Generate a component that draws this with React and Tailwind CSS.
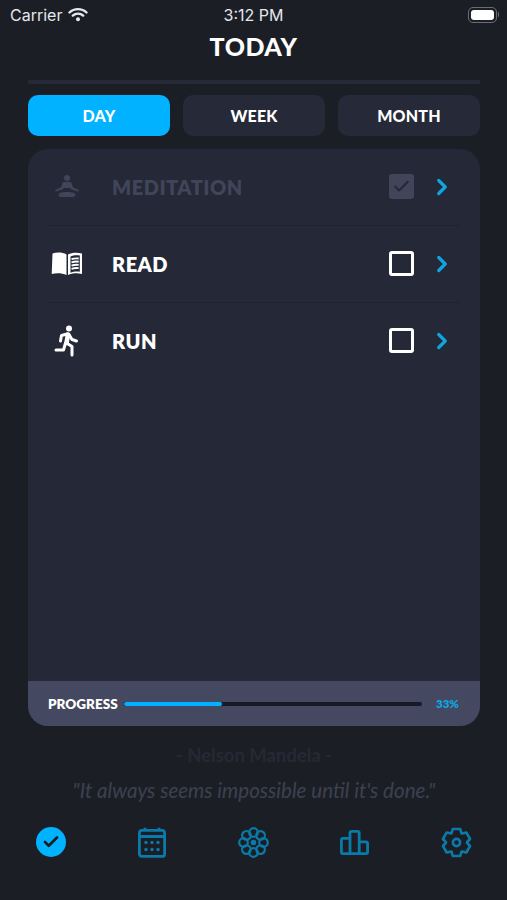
import { ChevronRight, Check } from 'lucide-react';

const heading = "font-['Lato',sans-serif]";

function WifiIcon() {
  return (
    <svg width="20" height="15" viewBox="0 0 20 15" fill="none" stroke="#e5e7eb" strokeLinecap="round">
      <path d="M1.500 5.500C6 1 14 1 18.500 5.500" strokeWidth="2.400" />
      <path d="M4.800 8.600C7.600 6 12.400 6 15.200 8.600" strokeWidth="2.400" />
      <circle cx="10" cy="12.300" r="2" fill="#e5e7eb" stroke="none" />
    </svg>
  );
}

function BatteryIcon() {
  return (
    <div className="flex items-center gap-px">
      <div className="w-[29px] h-[16px] rounded-[5px] border border-[#6b6e75] p-[2px]">
        <div className="w-full h-full rounded-[3px] bg-white" />
      </div>
      <div className="w-[1.5px] h-[5px] rounded-r bg-[#6b6e75]" />
    </div>
  );
}

function MeditationIcon({ color }) {
  return (
    <svg width="26" height="23" viewBox="0 0 26 23" fill={color}>
      <circle cx="13" cy="3" r="3" />
      <path d="M10.200 7h5.600c1 0 1.600.6 1.900 1.400l1.300 3.800 5.300 2.600c1 .5.5 1.900-.6 1.600l-6.700-2.100-.8-1.300H9.800l-.8 1.300-6.700 2.100c-1.100.3-1.600-1.100-.6-1.600l5.300-2.600 1.300-3.800C8.600 7.600 9.200 7 10.200 7z" />
      <path d="M6 18c4-1.400 10-1.400 14 0 2 .8 1.600 4-.8 4H6.800C4.400 22 4 18.800 6 18z" />
    </svg>
  );
}

function BookIcon() {
  return (
    <svg width="32" height="25" viewBox="0 0 32 25">
      <path d="M1.500 2.500C6 1 11.500 1.200 15.500 3.500V24C11.500 22.200 5.500 21.800 .7 23z" fill="#fff" />
      <path d="M17 3.500C20.500 1.500 26 1 31 2.500V23c-4.500-1.200-10.500-.8-14 1z" fill="#fff" />
      <path d="M19.500 5.500c2.800-1.300 6.500-1.500 9.300-.9v16.200c-2.800-.6-6.500-.4-9.300.9z" fill="#242837" />
      <path d="M20.500 8.200c2.400-.8 4.900-1 7.200-.7M20.500 11.400c2.400-.8 4.900-1 7.200-.7M20.500 14.600c2.400-.8 4.900-1 7.200-.7M20.500 17.800c2.400-.8 4.900-1 7.200-.7" stroke="#fff" strokeWidth="1.900" fill="none" />
    </svg>
  );
}

function RunIcon() {
  return (
    <svg width="26" height="32" viewBox="0 0 26 32" fill="none" stroke="#fff" strokeWidth="3" strokeLinecap="round" strokeLinejoin="round">
      <circle cx="15" cy="3.400" r="3" fill="#fff" stroke="none" />
      <path d="M14 9.500l-1.500 8.500" strokeWidth="4.600" />
      <path d="M13 9l-5.500 1.500-1 5.500" />
      <path d="M15 9.500l3 5 4.500 1.500" />
      <path d="M12.500 18l5.500 3.500V30" />
      <path d="M11.500 18L9.500 25H2" />
    </svg>
  );
}

function CalendarIcon() {
  return (
    <svg width="28" height="31" viewBox="0 0 28 31" fill="none" stroke="#0a7aa8" strokeWidth="2.800">
      <rect x="1.400" y="3.400" width="25.200" height="26" rx="2.500" />
      <path d="M1.400 9.500h25.200M7 .8v3M21 .8v3" />
      <g fill="#0a7aa8" stroke="none">
        <circle cx="8" cy="15.500" r="1.700" /><circle cx="14" cy="15.500" r="1.700" /><circle cx="20" cy="15.500" r="1.700" />
        <circle cx="8" cy="22.500" r="1.700" /><circle cx="14" cy="22.500" r="1.700" /><circle cx="20" cy="22.500" r="1.700" />
      </g>
    </svg>
  );
}

function AtomIcon() {
  const angles = [0, 45, 90, 135, 180, 225, 270, 315];
  return (
    <svg width="31" height="31" viewBox="0 0 31 31" fill="none" stroke="#0a7aa8" strokeWidth="2.200">
      <circle cx="15.500" cy="15.500" r="2.800" fill="#0a7aa8" stroke="none" />
      {angles.map(a => (
        <circle key={a} cx="15.500" cy="5.500" r="4.300" transform={`rotate(${a} 15.500 15.500)`} />
      ))}
    </svg>
  );
}

function BarsIcon() {
  return (
    <svg width="29" height="25" viewBox="0 0 29 25" fill="none" stroke="#0a7aa8" strokeWidth="2.800" strokeLinejoin="round">
      <path d="M10 23.600V3a1.600 1.600 0 0 1 1.600-1.600h6A1.600 1.600 0 0 1 19.200 3v20.600z" />
      <path d="M10 23.600H3a1.600 1.600 0 0 1-1.600-1.600V10a1.600 1.600 0 0 1 1.600-1.600h7" />
      <path d="M19.200 23.600H26a1.600 1.600 0 0 0 1.600-1.600V13.500a1.600 1.600 0 0 0-1.600-1.600h-6.800" />
    </svg>
  );
}

// six flat teeth, computed so they stay evenly spaced
function gearPath(cx, cy, inner, outer) {
  const pts = [];
  for (let i = 0; i < 6; i++) {
    const a = (i * Math.PI) / 3 - Math.PI / 2;
    [[-0.5, inner], [-0.27, outer], [0.27, outer], [0.5, inner]].forEach(([d, r]) => {
      pts.push(`${(cx + r * Math.cos(a + d)).toFixed(2)} ${(cy + r * Math.sin(a + d)).toFixed(2)}`);
    });
  }
  return `M${pts.join('L')}Z`;
}

function GearIcon() {
  return (
    <svg width="31" height="31" viewBox="0 0 31 31" fill="none" stroke="#0a7aa8" strokeWidth="2.600" strokeLinejoin="round">
      <path d={gearPath(15.5, 15.5, 10.5, 14)} />
      <circle cx="15.500" cy="15.500" r="3.600" />
    </svg>
  );
}

function TaskRow({ icon, label, done, last }) {
  return (
    <div className={`h-[77px] pb-[2px] flex items-center pl-[22px] pr-[28px] relative ${last ? '' : "after:content-[''] after:absolute after:left-[20px] after:right-[20px] after:bottom-0 after:h-px after:bg-[#20232f]"}`}>
      <div className="w-[34px] flex justify-center shrink-0">{icon}</div>
      <span className={`${heading} ml-[28px] flex-1 text-[20px] font-extrabold tracking-[0.5px] leading-none ${done ? 'text-[#404559]' : 'text-white'}`}>
        {label}
      </span>
      {done ? (
        <div className="w-[25px] h-[25px] rounded-[3px] bg-[#404559] flex items-center justify-center">
          <Check size={19} strokeWidth={2.6} color="#242837" />
        </div>
      ) : (
        <div className="w-[25px] h-[25px] rounded-[3px] border-[3px] border-white" />
      )}
      <ChevronRight size={26} strokeWidth={3} color="#0ea5e0" className="ml-[15px] mr-[-3px]" />
    </div>
  );
}

export default function App() {
  return (
    <div className="w-[507px] h-[900px] bg-[#1c1e26] flex flex-col overflow-hidden">
      {/* status bar */}
      <div className="h-[29px] pl-[10px] pr-[8px] flex items-center justify-between relative font-['Inter',sans-serif] text-[16px] text-[#e5e7eb]">
        <div className="flex items-center gap-[6px] z-10">
          <span>Carrier</span>
          <WifiIcon />
        </div>
        <span className="absolute left-0 right-0 text-center">3:12 PM</span>
        <BatteryIcon />
      </div>

      <div className={`${heading} h-[36px] flex items-center justify-center text-[25px] font-black tracking-[0.5px] text-white`}>TODAY</div>

      <div className="pl-[28px] pr-[27px] flex flex-col flex-1">
        <div className="mt-[15px] h-[4px] bg-[#252938]" />

        <div className={`${heading} mt-[11px] flex gap-[13px] text-[16px] font-black tracking-[0.2px] text-white`}>
          <div className="flex-1 h-[41px] rounded-[10px] bg-[#00b2ff] flex items-center justify-center">DAY</div>
          <div className="flex-1 h-[41px] rounded-[10px] bg-[#252938] flex items-center justify-center">WEEK</div>
          <div className="flex-1 h-[41px] rounded-[10px] bg-[#252938] flex items-center justify-center">MONTH</div>
        </div>

        <div className="mt-[13px] h-[577px] rounded-[20px] bg-[#242837] overflow-hidden flex flex-col">
          <TaskRow icon={<MeditationIcon color="#404559" />} label="MEDITATION" done />
          <TaskRow icon={<BookIcon />} label="READ" />
          <TaskRow icon={<RunIcon />} label="RUN" last />
          <div className="mt-auto h-[45px] pt-[1px] bg-[#444860] flex items-center pl-[20px] pr-[21px]">
            <span className={`${heading} text-[13.5px] font-extrabold text-white`}>PROGRESS</span>
            <div className="ml-[6px] w-[298px] h-[4px] rounded-full bg-[#161a26] overflow-hidden">
              <div className="w-[33%] h-full rounded-full bg-[#00b2ff]" />
            </div>
            <span className={`${heading} ml-auto text-[11.5px] font-extrabold text-[#0ea5e0]`}>33%</span>
          </div>
        </div>

        <div className={`${heading} mt-[19px] text-center text-[18.5px] font-bold leading-5 text-[#262934]`}>- Nelson Mandela -</div>
        <div className={`${heading} mt-[13px] text-center text-[20.6px] italic leading-6 text-[#3d4150]`}>"It always seems impossible until it's done."</div>
      </div>

      {/* tab bar */}
      <div className="h-[58px] mb-[29px] pl-[36px] pr-[35px] flex items-center justify-between">
        <div className="w-[30px] h-[30px] rounded-full bg-[#00b2ff] flex items-center justify-center">
          <Check size={18} strokeWidth={3.6} color="#1c1e26" />
        </div>
        <CalendarIcon />
        <AtomIcon />
        <BarsIcon />
        <GearIcon />
      </div>
    </div>
  );
}
